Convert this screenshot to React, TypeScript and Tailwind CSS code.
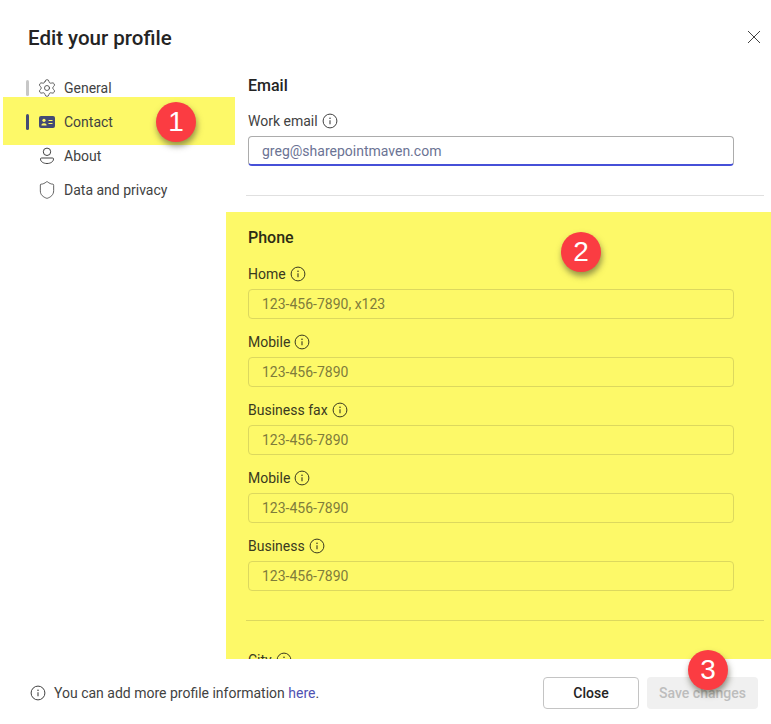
import { Settings, Shield } from "lucide-react";

const font = { fontFamily: 'Roboto, "Open Sans", sans-serif' };

function InfoIcon({ className = "" }: { className?: string }) {
  return (
    <svg viewBox="0 0 16 16" className={`h-[16px] w-[16px] shrink-0 ${className}`} fill="none">
      <circle cx="8" cy="8" r="6.9" stroke="currentColor" strokeWidth="1" />
      <circle cx="8" cy="5.2" r="0.8" fill="currentColor" />
      <path d="M8 7.3v4" stroke="currentColor" strokeWidth="1.1" />
    </svg>
  );
}

function CloseIcon() {
  return (
    <svg viewBox="0 0 14 14" className="h-[14px] w-[14px]" fill="none" stroke="currentColor" strokeWidth="1">
      <path d="M1 1l12 12M13 1L1 13" />
    </svg>
  );
}

function ContactIcon() {
  return (
    <svg viewBox="0 0 16 12" className="h-[12px] w-[16px]">
      <rect width="16" height="12" rx="2" fill="#444b74" />
      <circle cx="5" cy="4.300" r="1.600" fill="#fdf968" />
      <path d="M2.400 9.400c0-1.500 1-2.200 2.600-2.200s2.600.7 2.600 2.200z" fill="#fdf968" />
      <path d="M9.500 4.500h4M9.500 7.500h4" stroke="#fdf968" strokeWidth="1.200" />
    </svg>
  );
}

function PersonIcon() {
  return (
    <svg viewBox="0 0 16 18" className="h-[18px] w-[16px]" fill="none" stroke="currentColor" strokeWidth="1">
      <circle cx="8" cy="4.800" r="3.700" />
      <path d="M2.500 11h11a1 1 0 0 1 1 1c0 2.600-2.800 4.500-6.500 4.500S1.500 14.600 1.500 12a1 1 0 0 1 1-1z" />
    </svg>
  );
}

function NavItem({
  label,
  icon,
  bar,
}: {
  label: string;
  icon: React.ReactNode;
  bar?: string;
}) {
  return (
    <div className="relative flex h-[34px] items-center pl-[26px] text-[14px] text-[#424242]">
      <div className={`h-[16px] w-[3px] rounded-full ${bar ?? ""}`} />
      <div className="flex w-[35px] justify-center pl-[1px] text-[#424242]">{icon}</div>
      <span>{label}</span>
    </div>
  );
}

function Field({
  label,
  placeholder,
  tinted,
}: {
  label: string;
  placeholder: string;
  tinted?: boolean;
}) {
  return (
    <div className="mb-[13px]">
      <div className={`mb-[5px] flex h-[20px] items-center gap-[4px] text-[14px] ${tinted ? "text-[#3a3a20]" : "text-[#424242]"}`}>
        {label}
        <InfoIcon className="h-[15px] w-[15px]" />
      </div>
      <div
        className={`flex h-[30px] w-[486px] items-center rounded-[4px] border pl-[13px] pt-[1px] text-[14px] ${
          tinted
            ? "border-[#dcd85e] text-[#7f7c3b]"
            : "border-[#acacac] border-b-2 border-b-[#4650d8] text-[#6b7394]"
        }`}
      >
        {placeholder}
      </div>
    </div>
  );
}

function Badge({ n, className }: { n: number; className: string }) {
  return (
    <div
      className={`absolute flex h-[40px] w-[40px] items-center justify-center rounded-full bg-[#fb3c42] text-[28px] text-white shadow-[1px_4px_6px_rgba(60,60,40,0.55)] ${className}`}
      style={{ fontFamily: '"Liberation Sans", sans-serif' }}
    >
      {n}
    </div>
  );
}

export default function App() {
  return (
    <div className="relative h-[724px] w-[771px] overflow-hidden bg-white text-[#424242]" style={font}>
      <header className="flex h-[71px] items-start justify-between pl-[28px] pr-[10px] pt-[24px]">
        <h1 className="text-[20.500px] font-medium leading-[28px] text-[#242424]">Edit your profile</h1>
        <div className="mt-[6px] text-[#424242]">
          <CloseIcon />
        </div>
      </header>

      <div className="flex h-[588px]">
        <nav className="relative w-[226px] shrink-0">
          <NavItem label="General" icon={<Settings size={20} strokeWidth={1} />} bar="bg-[#c7c7c7]" />
          <div className="relative">
            {/* highlight runs slightly past the sidebar */}
            <div className="absolute left-[3px] top-[-8px] h-[48px] w-[232px] bg-[#fdf968]" />
            <NavItem label="Contact" icon={<ContactIcon />} bar="bg-[#444b74]" />
          </div>
          <NavItem label="About" icon={<PersonIcon />} />
          <NavItem label="Data and privacy" icon={<Shield size={20} strokeWidth={1} />} />
        </nav>

        <main className="flex min-w-0 flex-1 flex-col">
          <section className="pl-[22px] pt-[5px]">
            <h2 className="mb-[15px] h-[20px] text-[16px] font-medium leading-[20px] text-[#242424]">Email</h2>
            <Field label="Work email" placeholder="greg@sharepointmaven.com" />
            <div className="ml-[-2px] mt-[29px] h-px w-[518px] bg-[#e0e0e0]" />
          </section>

          <section className="mt-[16px] flex-1 overflow-hidden bg-[#fdf968] pl-[22px] pt-[16px]">
            <h2 className="mb-[16px] h-[20px] text-[16px] font-medium leading-[20px] text-[#2c2c14]">Phone</h2>
            <Field tinted label="Home" placeholder="123-456-7890, x123" />
            <Field tinted label="Mobile" placeholder="123-456-7890" />
            <Field tinted label="Business fax" placeholder="123-456-7890" />
            <Field tinted label="Mobile" placeholder="123-456-7890" />
            <Field tinted label="Business" placeholder="123-456-7890" />
            <div className="ml-[-2px] mt-[29px] h-px w-[518px] bg-[#dcd85e]" />
            <div className="mt-[29px]">
              <Field tinted label="City" placeholder="" />
            </div>
          </section>
        </main>
      </div>

      <footer className="flex h-[65px] items-center justify-between pl-[30px] pr-[13px] pt-[3px]">
        <div className="flex items-center gap-[8px] text-[14px] text-[#424242]">
          <InfoIcon />
          <span>
            You can add more profile information <span className="text-[#4f52b2]">here</span>.
          </span>
        </div>
        <div className="flex gap-[8px]">
          <button className="h-[32px] w-[96px] rounded-[4px] border border-[#c4c4c4] bg-white text-[14px] font-medium text-[#242424]">
            Close
          </button>
          <button className="h-[32px] w-[111px] rounded-[4px] bg-[#f0f0f0] text-[14px] font-medium text-[#bdbdbd]">
            Save changes
          </button>
        </div>
      </footer>

      <Badge n={1} className="left-[156px] top-[102px]" />
      <Badge n={2} className="left-[561px] top-[232px]" />
      <Badge n={3} className="left-[688px] top-[650px]" />
    </div>
  );
}
